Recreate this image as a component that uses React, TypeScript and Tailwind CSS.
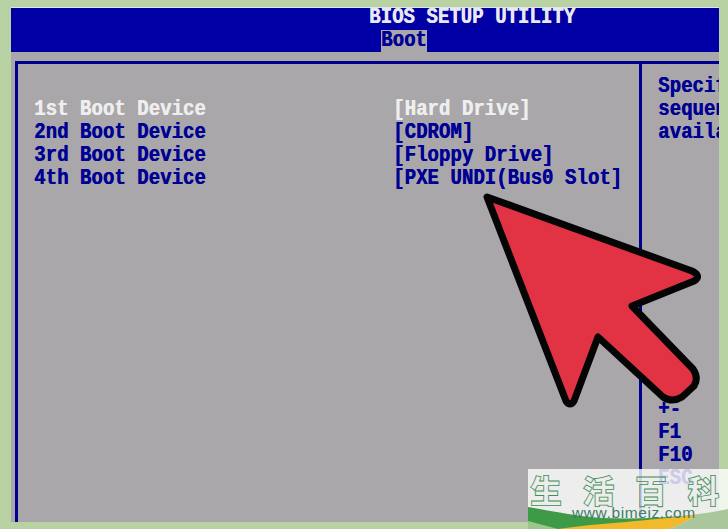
const mono = "font-['Liberation_Mono','DejaVu_Sans_Mono',monospace] font-bold text-[19px] leading-[23px] tracking-[0.05px] whitespace-pre";

const bootRows = [
  { name: "1st Boot Device", value: "[Hard Drive]", active: true },
  { name: "2nd Boot Device", value: "[CDROM]", active: false },
  { name: "3rd Boot Device", value: "[Floppy Drive]", active: false },
  { name: "4th Boot Device", value: "[PXE UNDI(Bus0 Slot]", active: false },
];

// BIOS glyphs are taller and heavier than the mono font
function Glyphs({ children }: { children: string }) {
  return <span className="inline-block scale-y-[1.2] [text-shadow:0.5px_0_0_currentColor]">{children}</span>;
}

function App() {
  return (
    <div className="relative w-[728px] h-[529px] overflow-hidden bg-[#b9d2a3] pt-[7px] pl-[11px]">
      <div className="flex flex-col w-[708px] h-[515px] bg-[#a9a7a9] overflow-hidden">
        {/* Header */}
        <header className={`flex flex-col h-[45px] bg-[#0000a4] border-t border-[#dfe4f0] text-[#e8e8ee] ${mono}`}>
          <div className="pl-[358px] h-[20px] leading-[19px]"><Glyphs>BIOS SETUP UTILITY</Glyphs></div>
          <div className="pl-[370px] mt-auto">
            <span className="block w-[46px] h-[22px] leading-[21px] bg-[#a9a7a9] text-[#000094]"><Glyphs>Boot</Glyphs></span>
          </div>
        </header>

        {/* Main frame */}
        <main className="flex flex-1 mt-[9px] ml-[4px] border-t-[3px] border-l-[3px] border-[#00008c] min-h-0">
          <section className={`w-[624px] border-r-[3px] border-[#00008c] pt-[34px] pl-[16px] ${mono}`}>
            {bootRows.map((row) => (
              <div key={row.name} className={`flex ${row.active ? "text-[#eeeeee]" : "text-[#000094]"}`}>
                <span className="w-[359px]"><Glyphs>{row.name}</Glyphs></span>
                <span><Glyphs>{row.value}</Glyphs></span>
              </div>
            ))}
          </section>
          <aside className={`flex flex-col flex-1 overflow-hidden pl-[16px] pt-[11px] text-[#000094] ${mono}`}>
            <div><Glyphs>Specify</Glyphs></div>
            <div><Glyphs>sequence</Glyphs></div>
            <div><Glyphs>available</Glyphs></div>
            <div className="mt-auto mb-[32px]">
              <div><Glyphs>+-</Glyphs></div>
              <div><Glyphs>F1</Glyphs></div>
              <div><Glyphs>F10</Glyphs></div>
              <div><Glyphs>ESC</Glyphs></div>
            </div>
          </aside>
        </main>
      </div>

      {/* Arrow */}
      <svg className="absolute left-0 top-0" width="728" height="529" viewBox="0 0 728 529">
        <path
          d="M487 197 L692 271 Q702 276 694 281 L632 306 L693 369 Q699 378 694 386 L682 397 Q672 403 663 397 L598 337 L574 401 Q570 407 566 401 Z"
          fill="#e13343"
          stroke="#050505"
          strokeWidth="7"
          strokeLinejoin="round"
        />
      </svg>

      {/* Watermark */}
      <div className="absolute left-[528px] top-[469px] w-[200px] h-[60px] overflow-hidden bg-white/80">
        <svg className="absolute left-0 top-0" width="200" height="60" viewBox="0 0 200 60">
          <path d="M0 38 C25 42 45 47 75 49 C105 50 135 49 165 46 L120 60 H0 Z" fill="#3f9a48" />
          <path d="M30 60 C70 54 125 52 170 45 C160 52 150 57 140 60 Z" fill="#f2b92a" />
          <path d="M0 52 L30 60 H0 Z" fill="#9dc58e" />
          <path d="M170 45 C180 44 190 42 200 40 V60 H140 C150 57 160 52 170 45 Z" fill="#a9c79a" />
        </svg>
        <div className="relative flex pl-[2px] pt-[1px] gap-[20.5px] text-[32px] leading-[38px] text-transparent font-['Noto_Sans_CJK_SC',sans-serif] font-black [-webkit-text-stroke:0.8px_#3f8f55]">
          <span>生</span>
          <span>活</span>
          <span>百</span>
          <span>科</span>
        </div>
        <div className="absolute left-[44px] top-[35px] text-[15.5px] leading-[18px] text-[#3d7d68] tracking-[0.6px] font-['Liberation_Sans',sans-serif]">
          www.bimeiz.com
        </div>
      </div>
    </div>
  );
}

export default App;
